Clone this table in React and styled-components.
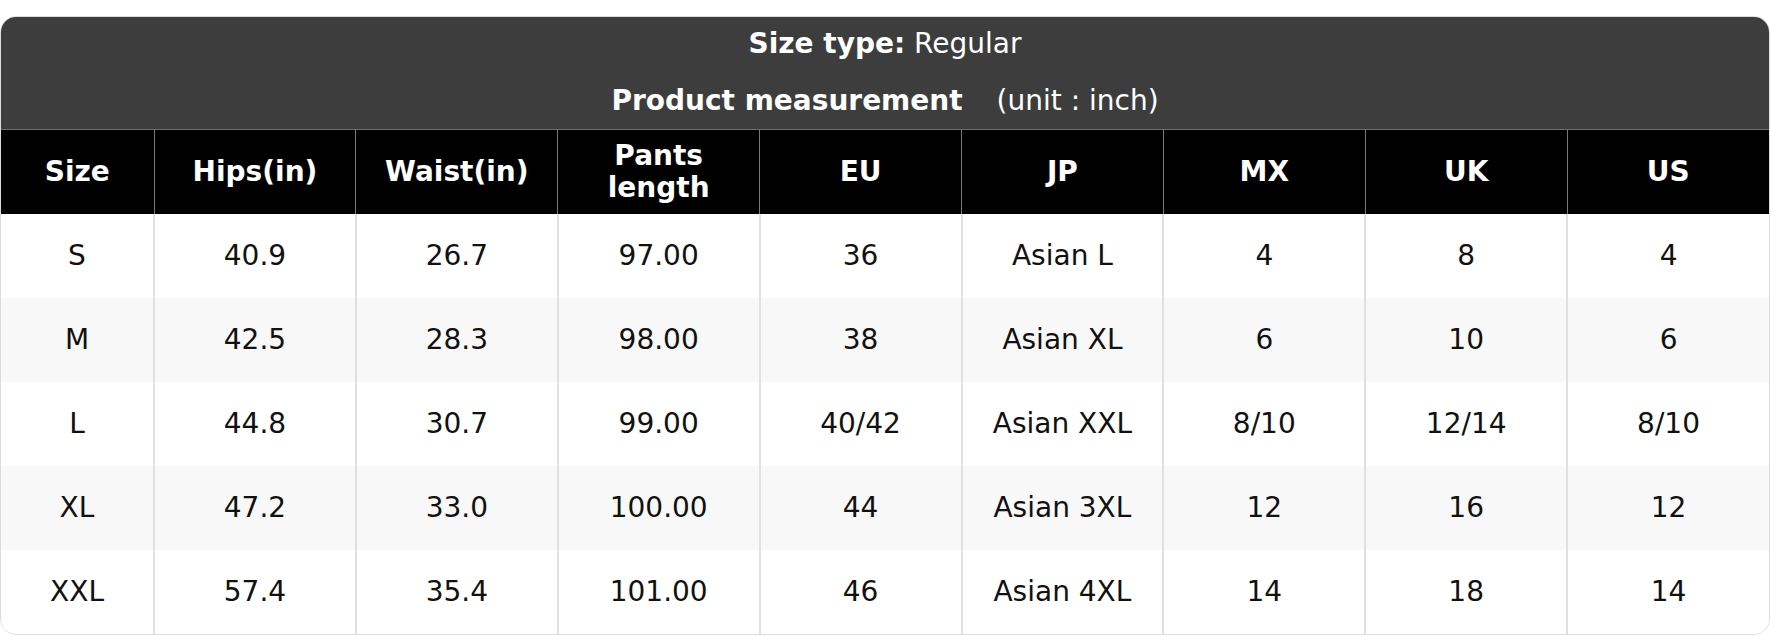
import React from "react";
import styled, { createGlobalStyle } from "styled-components";

const GlobalStyle = createGlobalStyle`
    html, body {
        margin: 0;
        padding: 0;
        background: #ffffff;
    }
    body {
        font-family: "DejaVu Sans", "Liberation Sans", sans-serif;
        color: #000;
    }
`;

const Page = styled.div`
    padding-top: 16px;
`;

const Card = styled.div`
    box-sizing: border-box;
    width: 1770px;
    border: 1px solid #dcdcdc;
    border-radius: 16px;
    overflow: hidden;
    background: #fff;
`;

const TitleBar = styled.div`
    background: #3d3d3d;
    color: #fff;
    display: flex;
    flex-direction: column;
    align-items: center;
    padding-bottom: 1px;
`;

const TitleLine = styled.div`
    height: ${({ tall }) => (tall ? "56px" : "52px")};
    margin-top: ${({ tall }) => (tall ? "3px" : "0")};
    display: flex;
    align-items: center;
    justify-content: center;
    font-size: 28px;
    white-space: pre;
`;

const Strong = styled.span`
    font-weight: bold;
`;

const Unit = styled.span`
    margin-left: 34px;
`;

const Table = styled.table`
    width: 100%;
    border-collapse: collapse;
    table-layout: fixed;
    font-size: 28px;
`;

const HeadCell = styled.th`
    background: #000;
    color: #fff;
    font-weight: bold;
    height: 84px;
    padding: 0 10px;
    box-sizing: border-box;
    line-height: 32px;
    text-align: center;
    vertical-align: middle;
    border-top: 1px solid #6e6e6e;
    border-left: ${({ first }) => (first ? "none" : "1px solid #7a7a7a")};
`;

const Row = styled.tr`
    background: ${({ shade }) => (shade ? "#f8f8f8" : "#ffffff")};
`;

const Cell = styled.td`
    height: 84px;
    padding: 0 10px;
    text-align: center;
    vertical-align: middle;
    color: #111;
    border-left: ${({ first }) => (first ? "none" : "2px solid #e0e0e0")};
`;

const columns = [
    { label: "Size", width: 153 },
    { label: "Hips(in)" },
    { label: "Waist(in)" },
    { label: "Pants\nlength" },
    { label: "EU" },
    { label: "JP" },
    { label: "MX" },
    { label: "UK" },
    { label: "US" },
];

const rows = [
    ["S", "40.9", "26.7", "97.00", "36", "Asian L", "4", "8", "4"],
    ["M", "42.5", "28.3", "98.00", "38", "Asian XL", "6", "10", "6"],
    ["L", "44.8", "30.7", "99.00", "40/42", "Asian XXL", "8/10", "12/14", "8/10"],
    ["XL", "47.2", "33.0", "100.00", "44", "Asian 3XL", "12", "16", "12"],
    ["XXL", "57.4", "35.4", "101.00", "46", "Asian 4XL", "14", "18", "14"],
];

const SizeChart = () => (
    <Card>
        <TitleBar>
            <TitleLine>
                <Strong>Size type:</Strong> Regular
            </TitleLine>
            <TitleLine tall>
                <Strong>Product measurement</Strong>
                <Unit>(unit : inch)</Unit>
            </TitleLine>
        </TitleBar>
        <Table>
            <colgroup>
                {columns.map(({ width }, key) => (
                    <col key={`col-${key}`} style={width ? { width } : undefined} />
                ))}
            </colgroup>
            <thead>
                <tr>
                    {columns.map(({ label }, key) => (
                        <HeadCell key={`head-${key}`} first={key === 0}>
                            {label.split("\n").map((part, i) => (
                                <React.Fragment key={i}>
                                    {i > 0 && <br />}
                                    {part}
                                </React.Fragment>
                            ))}
                        </HeadCell>
                    ))}
                </tr>
            </thead>
            <tbody>
                {rows.map((row, r) => (
                    <Row key={`row-${r}`} shade={r % 2 === 1}>
                        {row.map((value, c) => (
                            <Cell key={`cell-${r}-${c}`} first={c === 0}>
                                {value}
                            </Cell>
                        ))}
                    </Row>
                ))}
            </tbody>
        </Table>
    </Card>
);

const App = () => (
    <Page>
        <GlobalStyle />
        <SizeChart />
    </Page>
);

export default App;
